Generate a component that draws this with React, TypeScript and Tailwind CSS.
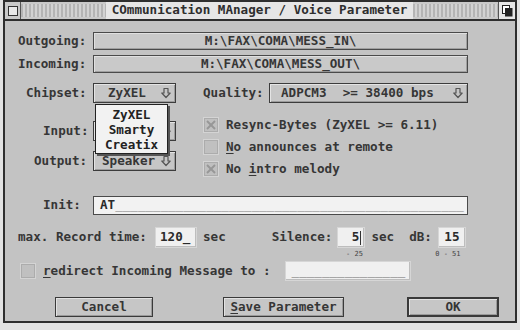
import React from "react";

const font = "font-['DejaVu_Sans_Mono',monospace] font-bold text-[12.6px] leading-none text-[#363636]";

function DownArrow() {
  return (
    <svg width="10" height="12" viewBox="0 0 10 12" className="shrink-0">
      <path d="M3 1.5h4v4.5h2.2L5 10.5 0.8 6H3z" fill="none" stroke="#555" strokeWidth="1.2" strokeLinejoin="round" />
    </svg>
  );
}

function Popup({ children, className = "" }: { children?: React.ReactNode; className?: string }) {
  return (
    <div className={`flex items-center h-[20px] border border-[#3c3c3c] bg-[#c6c6c6] shadow-[inset_1px_1px_0_#e4e4e4,inset_-1px_-1px_0_#9c9c9c] ${className}`}>
      {children}
      <span className="ml-auto mr-[4px] flex"><DownArrow /></span>
    </div>
  );
}

function Check({ checked }: { checked: boolean }) {
  return (
    <svg width="16" height="16" viewBox="0 0 16 16" className="shrink-0">
      <rect x="0.5" y="0.5" width="15" height="15" fill="#bcbcbc" stroke="#d4d4d4" />
      <rect x="1.5" y="1.5" width="13" height="13" fill="#c0c0c0" stroke="#acacac" />
      {checked && (
        <g stroke="#979797" strokeWidth="2">
          <line x1="4" y1="4" x2="12" y2="12" />
          <line x1="12" y1="4" x2="4" y2="12" />
        </g>
      )}
    </svg>
  );
}

function Button({ children, className = "" }: { children: React.ReactNode; className?: string }) {
  return (
    <div className={`h-[20px] flex items-center justify-center border border-[#3a3a3a] bg-[#c6c6c6] shadow-[inset_1px_1px_0_#e2e2e2,inset_-1px_-1px_0_#9a9a9a] ${className}`}>
      {children}
    </div>
  );
}

export default function App() {
  return (
    <div className={`w-[520px] h-[330px] bg-[#e2e2e2] overflow-hidden ${font}`}>
      <div className="ml-[3px] w-[514px] h-[323px] border-2 border-[#2e2e2e] bg-[#c3c3c3] flex flex-col">
        {/* title bar */}
        <div className="h-[19px] flex border-b-2 border-[#2e2e2e] bg-[#c9c9c9]">
          <div className="w-[16px] flex items-center justify-center border-r border-[#555]">
            <div className="w-[10px] h-[10px] border border-[#333] bg-[#e8e8e8]" />
          </div>
          <div className="flex-1 my-[2px] bg-[repeating-linear-gradient(90deg,#b4b4b4_0px,#b4b4b4_2px,#d2d2d2_2px,#d2d2d2_4px)]" />
          <div className="px-[6px] flex items-center bg-[#e6e6e6] text-[#2e2e2e]">COmmunication MAnager / Voice Parameter</div>
          <div className="flex-1 my-[2px] bg-[repeating-linear-gradient(90deg,#b4b4b4_0px,#b4b4b4_2px,#d2d2d2_2px,#d2d2d2_4px)]" />
          <div className="w-[17px] flex items-center justify-center border-l border-[#555] bg-[#e6e6e6]">
            <svg width="11" height="12" viewBox="0 0 11 12">
              <rect x="0.5" y="0.5" width="7" height="8" fill="#fff" stroke="#222" />
              <rect x="3" y="3" width="7.5" height="8.5" fill="#222" />
            </svg>
          </div>
        </div>

        {/* body */}
        <div className="flex flex-col">
          <div className="flex items-center mt-[11px] h-[18px]">
            <div className="w-[88px] pl-[13px]">Outgoing:</div>
            <div className="w-[375px] h-[18px] flex items-center justify-center border border-[#4a4a4a] bg-[#c9c9c9] shadow-[inset_1px_1px_0_#e0e0e0,inset_-1px_-1px_0_#a0a0a0]">M:\FAX\COMA\MESS_IN\</div>
          </div>
          <div className="flex items-center mt-[5px] h-[18px]">
            <div className="w-[88px] pl-[13px]">Incoming:</div>
            <div className="w-[375px] h-[18px] flex items-center justify-center border border-[#4a4a4a] bg-[#c9c9c9] shadow-[inset_1px_1px_0_#e0e0e0,inset_-1px_-1px_0_#a0a0a0]">M:\FAX\COMA\MESS_OUT\</div>
          </div>

          <div className="flex items-center mt-[10px] h-[20px]">
            <div className="w-[88px] pl-[21px]">Chipset:</div>
            <div className="relative">
              <Popup className="w-[83px] pl-[14px]">ZyXEL</Popup>
              <div className="absolute left-[2px] top-[21px] z-10 w-[73px] h-[50px] border border-[#222] bg-[#f2f2f2] shadow-[2px_2px_0_#555] flex flex-col items-center pt-[4px] gap-[3px] text-[#222]">
                <span className="h-[12px]">ZyXEL</span>
                <span className="h-[12px]">Smarty</span>
                <span className="h-[12px]">Creatix</span>
              </div>
            </div>
            <div className="ml-[27px] w-[66px]">Quality:</div>
            <Popup className="w-[199px] pl-[11px]">
              <span>ADPCM3</span>
              <span className="ml-auto mr-[3px]">&gt;= 38400 bps</span>
            </Popup>
          </div>

          {/* middle */}
          <div className="flex h-[73px]">
            <div className="flex flex-col">
              <div className="flex items-center mt-[18px] h-[20px]">
                <div className="w-[88px] pl-[38px]">Input:</div>
                <Popup className="w-[83px]" />
              </div>
              <div className="flex items-center mt-[10px] h-[20px]">
                <div className="w-[88px] pl-[29px]">Output:</div>
                <Popup className="w-[83px] pl-[8px]">Speaker</Popup>
              </div>
            </div>
            <div className="flex flex-col ml-[27px] mt-[14px] gap-[6px]">
              <div className="flex items-center gap-[7px] h-[16px]">
                <Check checked />
                <span>Resync-Bytes (ZyXEL &gt;= 6.11)</span>
              </div>
              <div className="flex items-center gap-[7px] h-[16px]">
                <Check checked={false} />
                <span><span className="underline underline-offset-2">N</span>o announces at remote</span>
              </div>
              <div className="flex items-center gap-[7px] h-[16px]">
                <Check checked />
                <span>No <span className="underline underline-offset-2">i</span>ntro melody</span>
              </div>
            </div>
          </div>

          <div className="flex items-center mt-[20px] h-[19px]">
            <div className="w-[88px] pl-[38px]">Init:</div>
            <div className="w-[375px] h-[19px] flex items-center pl-[6px] border border-[#4a4a4a] bg-[#f2f2f2] text-[#2a2a2a]">AT<span className="text-[#777] font-normal">______________________________________________</span></div>
          </div>

          <div className="flex items-start mt-[13px] h-[30px]">
            <div className="flex items-center h-[19px]">
              <div className="pl-[13px] w-[151px]">max. Record time:</div>
              <div className="w-[40px] h-[19px] flex items-center pl-[4px] bg-[#f0f0f0] shadow-[inset_-1px_-1px_0_#bdbdbd,0_0_0_1px_#d6d6d6] text-[#2a2a2a]">120_</div>
              <div className="ml-[7px]">sec</div>
              <div className="ml-[46px]">Silence:</div>
            </div>
            <div className="flex flex-col items-center ml-[6px]">
              <div className="w-[26px] h-[19px] flex items-center justify-end pr-[3px] bg-[#f0f0f0] shadow-[inset_-1px_-1px_0_#bdbdbd,0_0_0_1px_#d6d6d6] text-[#2a2a2a]">5<span className="w-[1px] h-[14px] bg-[#333] ml-[1px]" /></div>
              <div className="mt-[4px] text-[7px] font-normal text-[#444] pl-[6px]">- 25</div>
            </div>
            <div className="flex items-center h-[19px] ml-[7px]">sec</div>
            <div className="flex items-center h-[19px] ml-[15px]">dB:</div>
            <div className="flex flex-col items-center ml-[7px]">
              <div className="w-[26px] h-[19px] flex items-center justify-center bg-[#f0f0f0] shadow-[inset_-1px_-1px_0_#bdbdbd,0_0_0_1px_#d6d6d6] text-[#2a2a2a]">15</div>
              <div className="mt-[4px] text-[7px] font-normal text-[#444] -ml-[8px]">0 - 51</div>
            </div>
          </div>

          <div className="flex items-center mt-[4px] h-[18px]">
            <div className="ml-[15px]"><Check checked={false} /></div>
            <div className="ml-[7px]"><span className="underline underline-offset-2">r</span>edirect Incoming Message to :</div>
            <div className="ml-[16px] w-[124px] h-[18px] flex items-center justify-center bg-[#f0f0f0] shadow-[inset_-1px_-1px_0_#bdbdbd,0_0_0_1px_#d6d6d6] text-[#666] font-normal">_______________</div>
          </div>

          <div className="flex items-center mt-[17px]">
            <Button className="ml-[50px] w-[98px]">Cancel</Button>
            <Button className="ml-[70px] w-[121px]"><span className="underline underline-offset-2">S</span>ave Parameter</Button>
            <Button className="ml-[63px] w-[92px] border-2 border-[#2a2a2a]">OK</Button>
          </div>
        </div>
      </div>
    </div>
  );
}
